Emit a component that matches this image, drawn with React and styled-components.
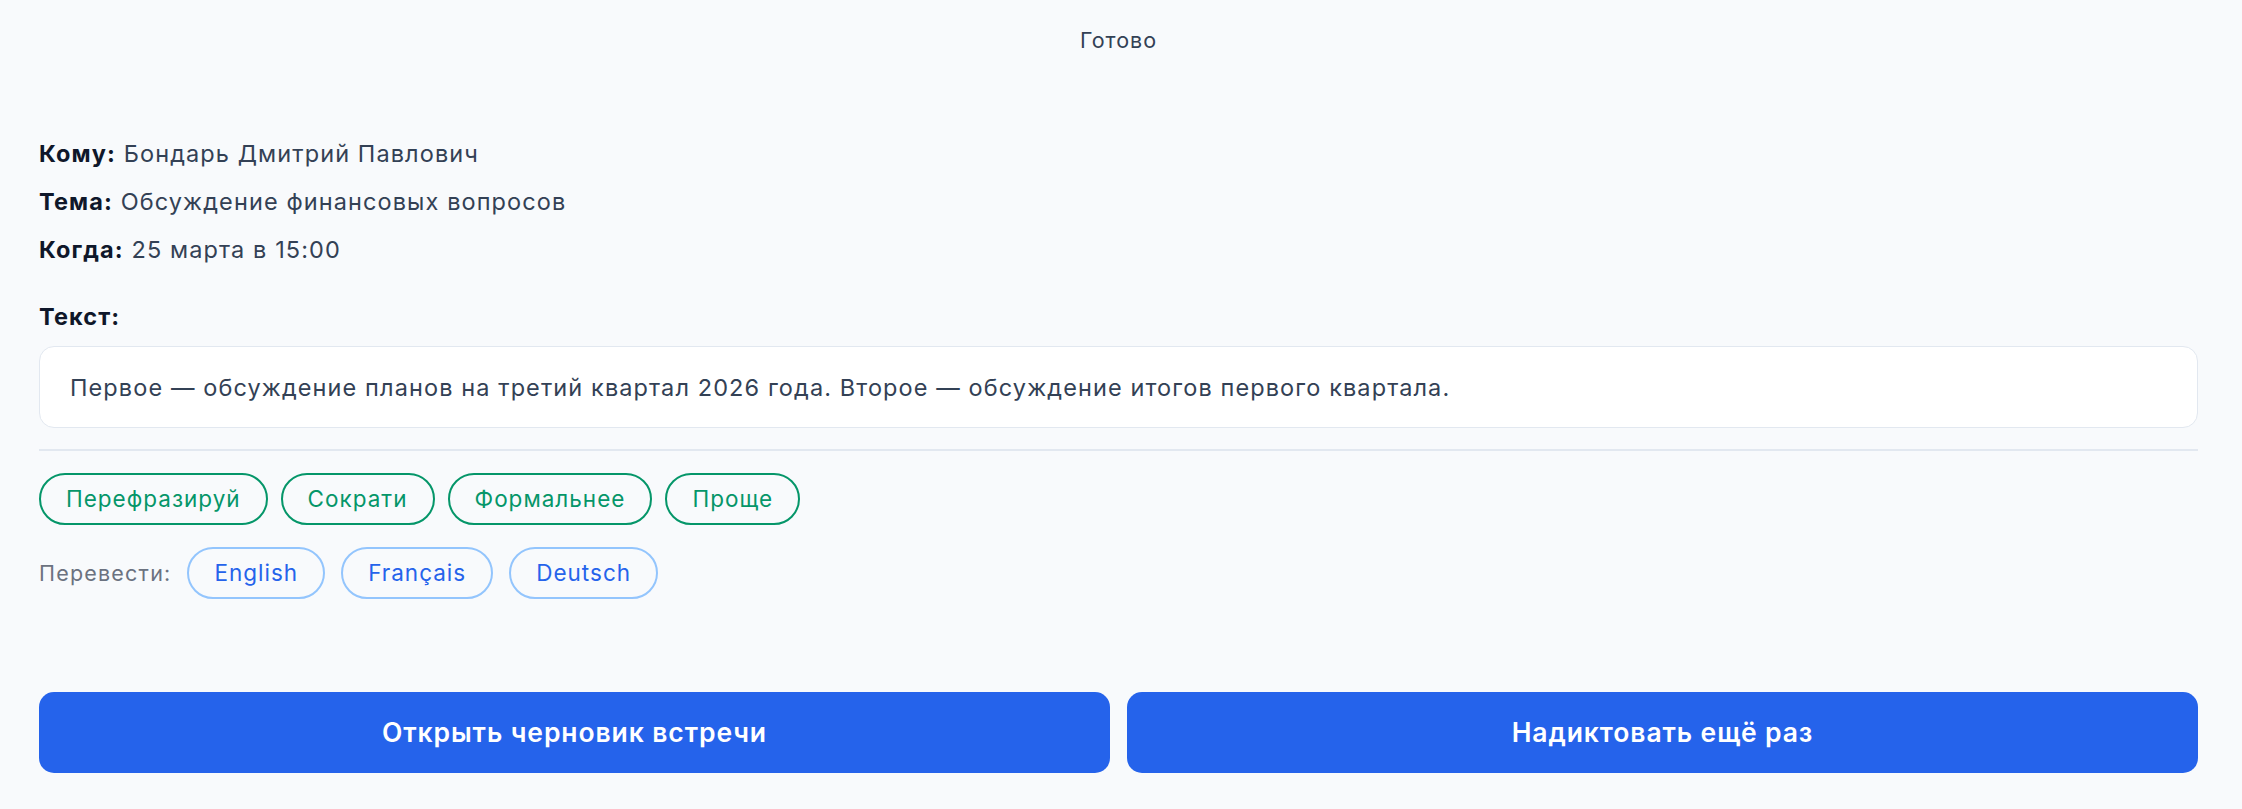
import styled, { createGlobalStyle } from "styled-components";

const GlobalStyle = createGlobalStyle`
  html, body {
    margin: 0;
    padding: 0;
    background: #f8fafc;
  }
  body {
    font-family: Inter, "Noto Sans", "Liberation Sans", sans-serif;
    -webkit-font-smoothing: antialiased;
  }
`;

const Page = styled.div`
  min-height: 100vh;
  box-sizing: border-box;
  padding: 0 44px 0 39px;
  display: flex;
  flex-direction: column;
`;

const Header = styled.div`
  height: 79px;
  display: flex;
  align-items: center;
  justify-content: center;
  font-size: 21.5px;
  letter-spacing: 1px;
  color: #334155;
`;

const Fields = styled.div`
  margin-top: 58px;
  display: flex;
  flex-direction: column;
  gap: 14px;
`;

const Field = styled.div`
  font-size: 23.5px;
  line-height: 34px;
  letter-spacing: 1.1px;
  color: #334155;

  b {
    font-weight: 700;
    color: #0f172a;
  }
`;

const Label = styled.div`
  margin-top: 33px;
  font-size: 23.5px;
  line-height: 34px;
  letter-spacing: 1.1px;
  font-weight: 700;
  color: #0f172a;
`;

const TextBox = styled.div`
  margin-top: 12px;
  height: 82px;
  box-sizing: border-box;
  display: flex;
  align-items: center;
  padding: 0 30px;
  background: #ffffff;
  border: 1.5px solid #e2e8f0;
  border-radius: 15px;
  font-size: 23.5px;
  letter-spacing: 1.1px;
  color: #334155;
`;

const Divider = styled.hr`
  margin: 21px 0 0;
  border: none;
  height: 1.5px;
  background: #e2e8f0;
`;

const ChipRow = styled.div`
  display: flex;
  align-items: center;
  gap: ${(props) => props.gap}px;
  margin-top: 22px;
`;

const RowLabel = styled.span`
  font-size: 21.5px;
  letter-spacing: 1.2px;
  color: #6b7280;
`;

const Chip = styled.button`
  height: 52px;
  box-sizing: border-box;
  padding: 0 25px;
  border-radius: 999px;
  background: transparent;
  font-family: inherit;
  font-size: 22.5px;
  letter-spacing: 1px;
  cursor: pointer;
  border: 2px solid
    ${(props) => (props.tone === "green" ? "#059669" : "#93c5fd")};
  color: ${(props) => (props.tone === "green" ? "#059669" : "#2563eb")};
`;

const Actions = styled.div`
  margin-top: 93px;
  display: grid;
  grid-template-columns: 1fr 1fr;
  gap: 17px;
`;

const ActionButton = styled.button`
  height: 81px;
  border: none;
  border-radius: 15px;
  background: #2563eb;
  color: #ffffff;
  font-family: inherit;
  font-size: 26.5px;
  letter-spacing: 0.9px;
  font-weight: 600;
  cursor: pointer;
`;

const App = () => {
  const edits = ["Перефразируй", "Сократи", "Формальнее", "Проще"];
  const langs = ["English", "Français", "Deutsch"];

  return (
    <>
      <GlobalStyle />
      <Page>
        <Header>Готово</Header>
        <Fields>
          <Field>
            <b>Кому:</b> Бондарь Дмитрий Павлович
          </Field>
          <Field>
            <b>Тема:</b> Обсуждение финансовых вопросов
          </Field>
          <Field>
            <b>Когда:</b> 25 марта в 15:00
          </Field>
        </Fields>
        <Label>Текст:</Label>
        <TextBox>
          Первое — обсуждение планов на третий квартал 2026 года. Второе —
          обсуждение итогов первого квартала.
        </TextBox>
        <Divider />
        <ChipRow gap={13}>
          {edits.map((e) => (
            <Chip key={e} tone="green">
              {e}
            </Chip>
          ))}
        </ChipRow>
        <ChipRow gap={16}>
          <RowLabel>Перевести:</RowLabel>
          {langs.map((l) => (
            <Chip key={l} tone="blue">
              {l}
            </Chip>
          ))}
        </ChipRow>
        <Actions>
          <ActionButton>Открыть черновик встречи</ActionButton>
          <ActionButton>Надиктовать ещё раз</ActionButton>
        </Actions>
      </Page>
    </>
  );
};

export default App;
